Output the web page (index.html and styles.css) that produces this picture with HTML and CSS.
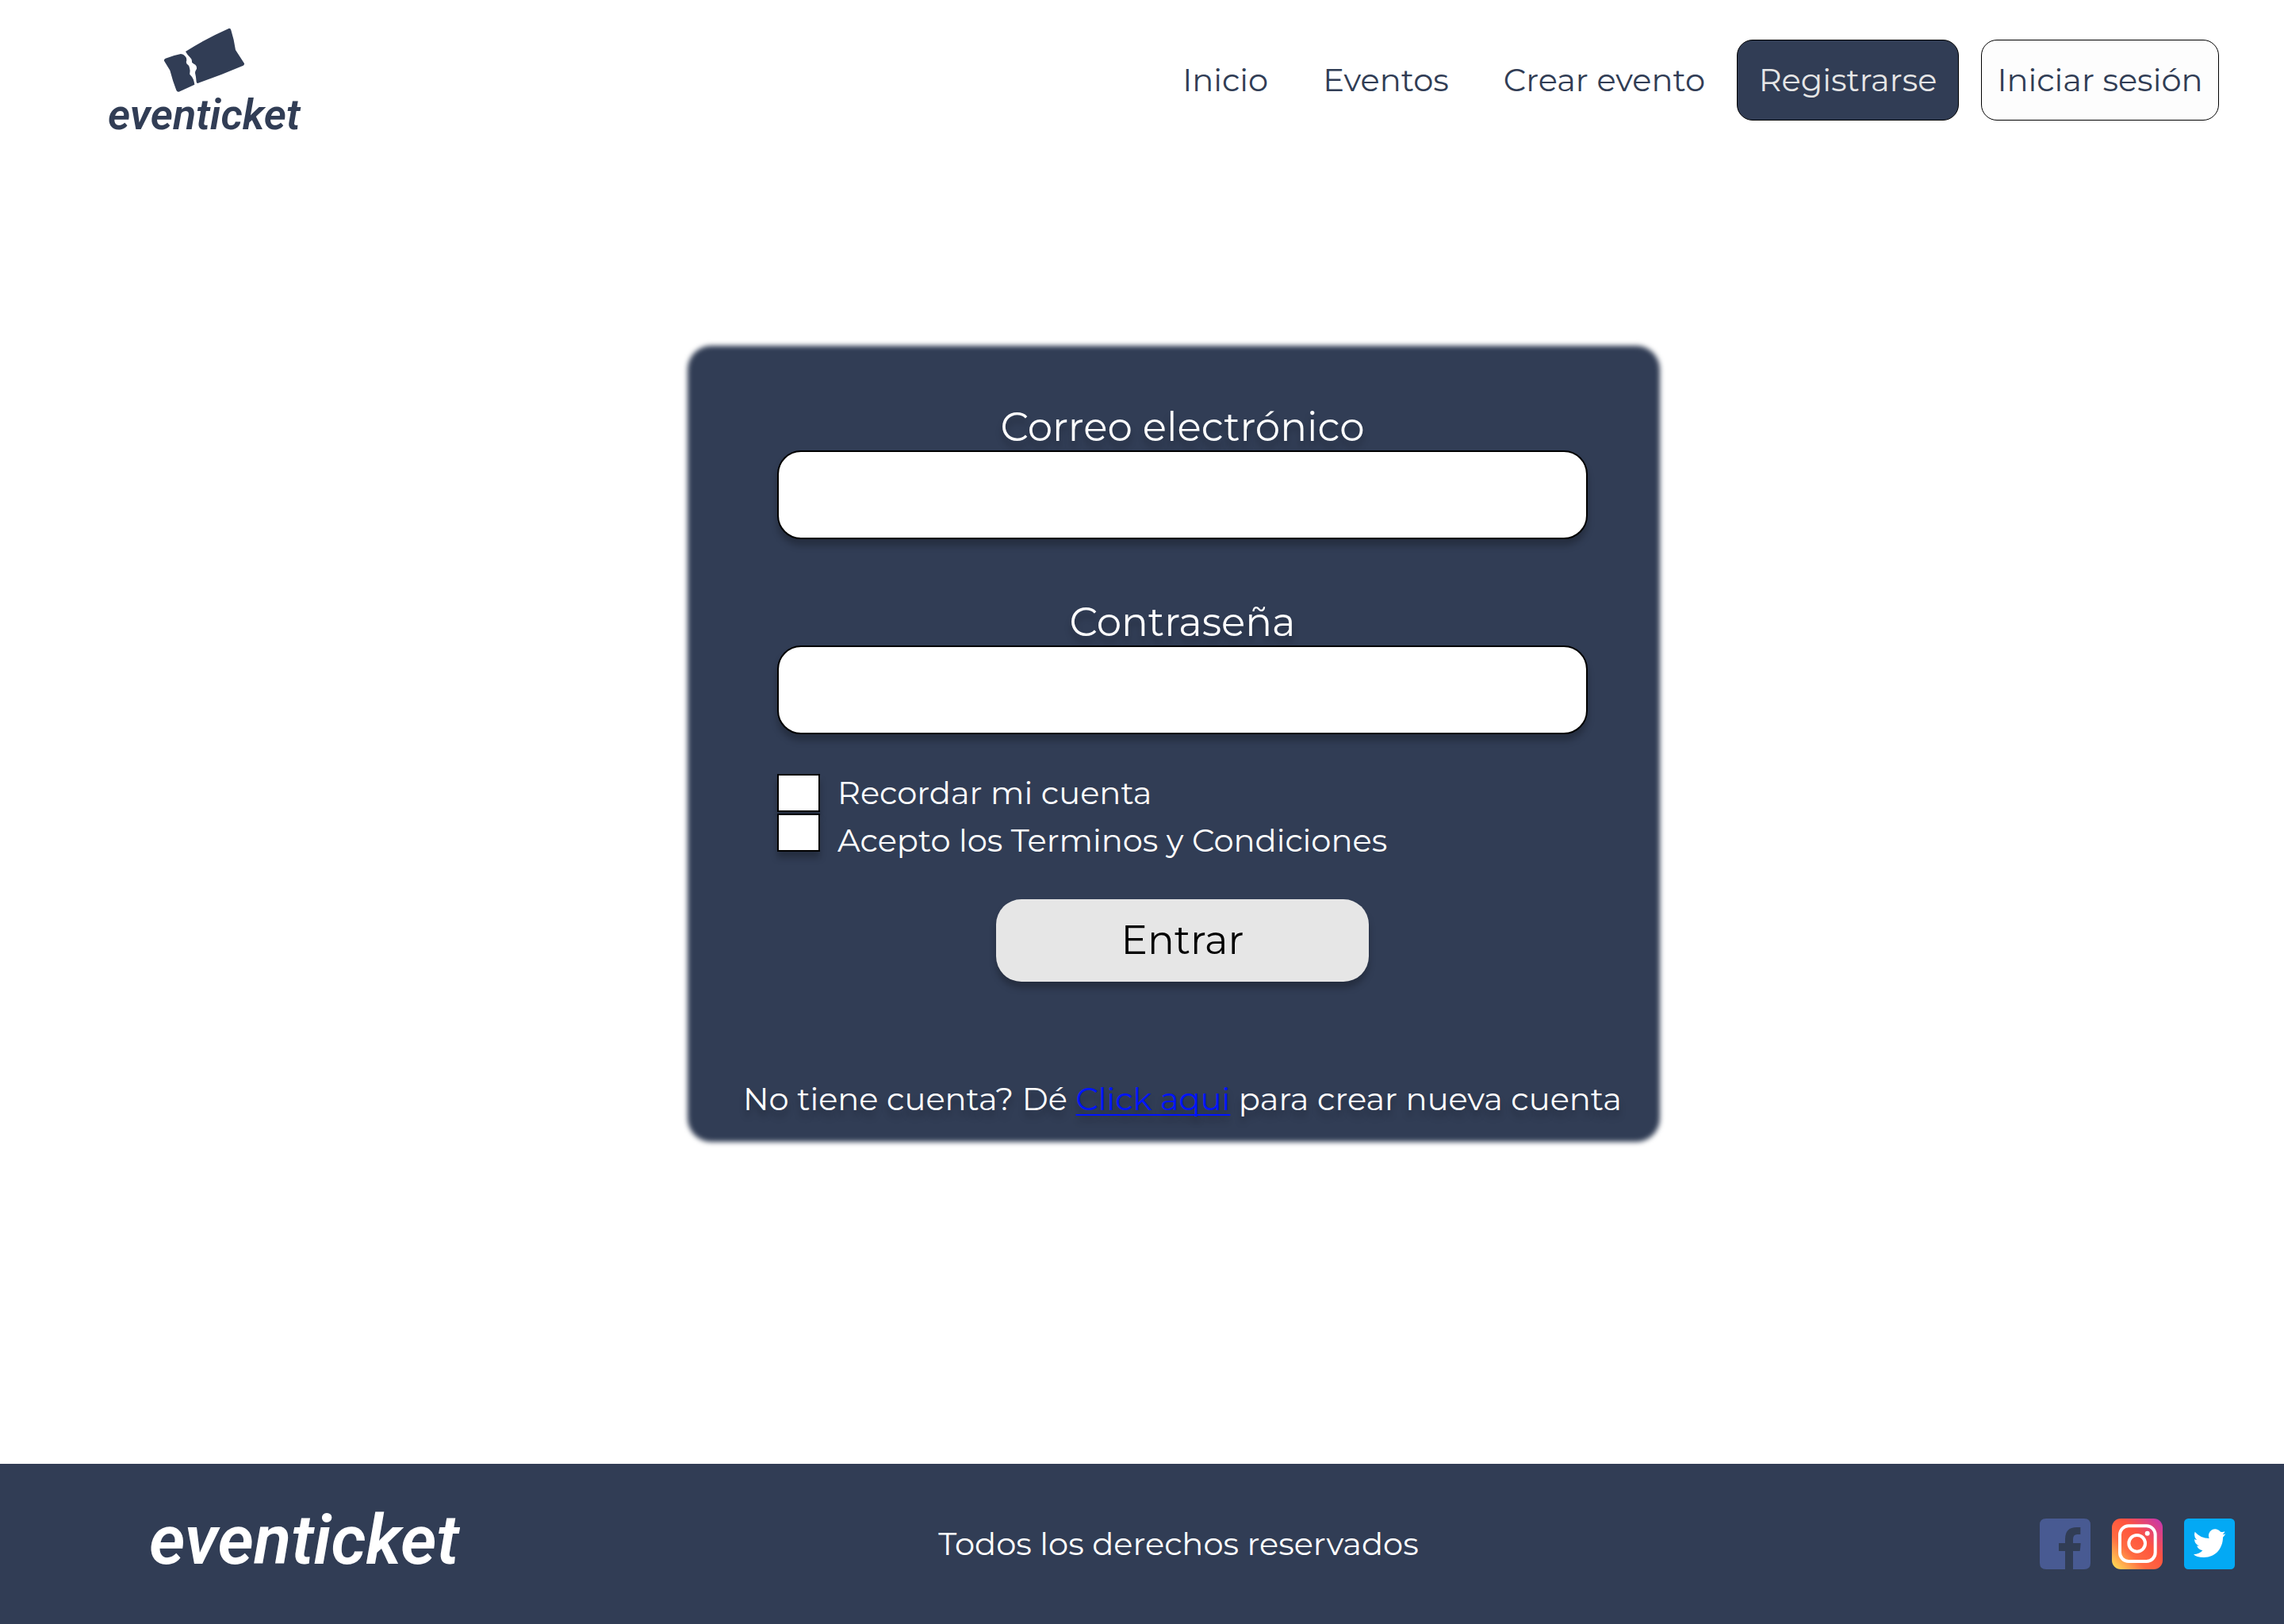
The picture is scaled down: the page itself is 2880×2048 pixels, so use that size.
FILE: index.html
```html
<!DOCTYPE html>
<html lang="es">
<head>
  <meta charset="utf-8">
  <meta name="viewport" content="width=device-width, initial-scale=1">
  <title>Eventicket - Iniciar sesión</title>
  <link rel="stylesheet" href="styles.css">
</head>
<body>
  <header class="header">
    <a class="brand" href="#">
      <svg class="brand-ticket" viewBox="320 45 309 246" aria-hidden="true">
        <path d="M404 135 Q485 84 567 48 Q574 46 576 54 Q587 88 593 129 L626 180 Q627 185 622 188 Q535 225 450 255 Q445 255 445 250 Q444 232 440 216 Q440 209 446 200 Q447 190 441 185 Q433 181 428 176 Q429 164 422 158 Q412 150 404 135 Z"/>
        <path d="M328 161 Q355 150 386 144 Q396 144 402 152 Q409 158 408 168 Q404 176 408 181 Q418 188 419 197 Q422 206 420 216 Q418 222 423 225 Q435 236 438 260 Q410 273 379 287 Q372 289 369 281 Q355 245 345 206 L323 170 Q321 164 328 161 Z"/>
      </svg>
      <span class="wordmark">eventicket</span>
    </a>
    <nav class="nav">
      <ul class="nav-links">
        <li><a href="#">Inicio</a></li>
        <li><a href="#">Eventos</a></li>
        <li><a href="#">Crear evento</a></li>
      </ul>
      <div class="nav-actions">
        <button class="btn btn-register" type="button">Registrarse</button>
        <button class="btn btn-login" type="button">Iniciar sesión</button>
      </div>
    </nav>
  </header>

  <main class="main">
    <form class="card">
      <div class="field">
        <label for="email">Correo electrónico</label>
        <input id="email" type="email">
      </div>
      <div class="field">
        <label for="password">Contraseña</label>
        <input id="password" type="password">
      </div>
      <div class="checks">
        <div class="check-boxes">
          <input id="remember" type="checkbox">
          <input id="terms" type="checkbox">
        </div>
        <div class="check-labels">
          <label for="remember">Recordar mi cuenta</label>
          <label for="terms">Acepto los Terminos y Condiciones</label>
        </div>
      </div>
      <button class="submit" type="submit">Entrar</button>
      <p class="signup">No tiene cuenta? Dé <a href="#">Click aqui</a> para crear nueva cuenta</p>
    </form>
  </main>

  <footer class="footer">
    <a class="wordmark wordmark-large" href="#">eventicket</a>
    <p class="rights">Todos los derechos reservados</p>
    <div class="social">
      <a href="#" aria-label="Facebook">
        <svg viewBox="0 0 192 192">
          <path fill="#485a92" d="M24 0H168Q192 0 192 24V168Q192 192 168 192H126V123H152Q154 110 155 93H126V78Q126 60 142 60H154V33H140Q96 33 96 78V93H72V123H96V192H24Q0 192 0 168V24Q0 0 24 0Z"/>
        </svg>
      </a>
      <a href="#" aria-label="Instagram">
        <svg viewBox="0 0 192 192">
          <defs>
            <linearGradient id="ig" x1="0" y1="1" x2="1" y2="0">
              <stop offset="0.04" stop-color="#ffd955"/>
              <stop offset="0.34" stop-color="#ff6b42"/>
              <stop offset="0.6" stop-color="#ff543e"/>
              <stop offset="0.96" stop-color="#c837ab"/>
            </linearGradient>
          </defs>
          <rect width="192" height="192" rx="34" fill="url(#ig)"/>
          <rect x="30" y="28" width="134" height="134" rx="33" fill="none" stroke="#fff" stroke-width="12"/>
          <circle cx="95" cy="94" r="31" fill="none" stroke="#fff" stroke-width="12"/>
          <circle cx="134" cy="56" r="9" fill="#fff"/>
        </svg>
      </a>
      <a href="#" aria-label="Twitter">
        <svg viewBox="0 0 192 192">
          <rect width="192" height="192" rx="16" fill="#03a9f4"/>
          <path fill="#fff" d="M157 58Q151 61 146 61Q153 56 154 49Q146 53 138 50A25 25 0 0 0 95 75Q62 75 41 50Q35 69 48 81Q44 81 39 78Q40 97 56 103Q53 104 48 103Q54 118 70 121Q58 134 36 136Q45 147 75 147C125 147 147 105 147 71Q152 66 157 58Z"/>
        </svg>
      </a>
    </div>
  </footer>
</body>
</html>
```
FILE: styles.css
```css
:root {
  --navy: #313d55;
  --light: #e6e6e6;
}

* {
  box-sizing: border-box;
}

body {
  margin: 0;
  min-height: 100vh;
  display: flex;
  flex-direction: column;
  background: #fff;
  color: var(--navy);
  font: 400 40px/60px Montserrat, Inter, "Open Sans", sans-serif;
}

a {
  color: inherit;
  text-decoration: none;
}

button,
input {
  font: inherit;
}

.header {
  display: flex;
  align-items: center;
  justify-content: space-between;
  min-height: 202px;
  padding: 0 82px 0 136px;
}

.brand {
  display: flex;
  flex-direction: column;
  align-items: center;
  gap: 2px;
  padding-top: 4px;
}

.brand-ticket {
  width: 103px;
  height: 82px;
  fill: var(--navy);
}

.wordmark {
  font: italic 600 54px/52px Roboto, "Open Sans", sans-serif;
}

.wordmark-large {
  padding: 0 0 10px 34px;
  font-size: 87px;
  line-height: 84px;
}

.nav,
.nav-links,
.nav-actions {
  display: flex;
  align-items: center;
}

.nav {
  gap: 40px;
}

.nav-links {
  gap: 69px;
  margin: 0;
  padding: 0;
  list-style: none;
}

.nav-actions {
  gap: 28px;
}

.btn {
  height: 102px;
  padding: 0;
  border: 1px solid #000;
  border-radius: 20px;
}

.btn-register {
  width: 280px;
  background: var(--navy);
  color: var(--light);
}

.btn-login {
  width: 300px;
  background: #fdfdfd;
  color: var(--navy);
}

.main {
  flex: 1;
  display: flex;
  justify-content: center;
  align-items: flex-start;
  padding: 234px 0 200px 80px;
}

.card {
  position: relative;
  z-index: 0;
  display: flex;
  flex-direction: column;
  align-items: center;
  width: 1226px;
  padding: 74px 48px 24px 70px;
  color: #fff;
}

.card::before {
  content: "";
  position: absolute;
  inset: 0;
  z-index: -1;
  border-radius: 30px;
  background: var(--navy);
  filter: blur(3px);
}

.field,
.checks {
  width: 1022px;
}

.field {
  display: flex;
  flex-direction: column;
  margin-bottom: 76px;
  font-size: 50px;
  line-height: 58px;
}

.field + .checks {
  margin-top: -32px;
}

.field label {
  text-align: center;
  text-shadow: 0 8px 8px rgba(0, 0, 0, 0.25);
}

.field input {
  height: 112px;
  padding: 0 32px;
  border: 2px solid #000;
  border-radius: 30px;
  background: #fff;
  box-shadow: 0 8px 8px rgba(0, 0, 0, 0.25);
}

.checks {
  display: flex;
  gap: 22px;
}

.check-boxes,
.check-labels {
  display: flex;
  flex-direction: column;
}

.check-boxes {
  gap: 2px;
  padding-top: 6px;
}

.check-boxes input {
  appearance: none;
  width: 54px;
  height: 48px;
  margin: 0;
  border: 2px solid #000;
  background: #fff;
  box-shadow: 0 8px 8px rgba(0, 0, 0, 0.25);
}

.check-boxes input:checked {
  background: #8fa3c8;
}

.submit {
  width: 470px;
  height: 104px;
  margin: 44px 0 118px;
  padding: 0;
  border: 0;
  border-radius: 32px;
  background: var(--light);
  color: #000;
  font-size: 50px;
  box-shadow: 0 8px 8px rgba(0, 0, 0, 0.25);
}

.signup {
  margin: 0;
  white-space: nowrap;
  text-shadow: 0 8px 8px rgba(0, 0, 0, 0.25);
}

.signup a {
  color: #0014ff;
  text-decoration: underline 2px;
  text-decoration-skip-ink: none;
  text-underline-offset: 5px;
}

.footer {
  display: grid;
  grid-template-columns: 1fr auto 1fr;
  align-items: center;
  min-height: 202px;
  padding: 0 62px 0 154px;
  background: var(--navy);
  color: #fff;
}

.rights {
  margin: 0;
}

.social {
  display: flex;
  justify-content: flex-end;
  gap: 27px;
}

.social svg {
  display: block;
  width: 64px;
  height: 64px;
}
```
